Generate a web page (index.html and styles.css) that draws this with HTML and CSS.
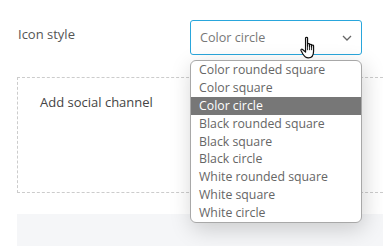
FILE: index.html
```html
<!DOCTYPE html>
<html lang="en">
<head>
  <meta charset="UTF-8" />
  <title>Icon style</title>
  <link rel="stylesheet" href="styles.css">
</head>
<body>

<div class="settings">
  <div class="field-row">
    <label class="field-label">Icon style</label>
    <div class="select-wrap">
      <div class="select-box">
        <span class="select-value">Color circle</span>
        <svg class="chevron" width="10" height="6" viewBox="0 0 10 6">
          <path d="M1 1 L5 5 L9 1" fill="none" stroke="#666" stroke-width="1.3"/>
        </svg>
      </div>

      <ul class="options">
        <li>Color rounded square</li>
        <li>Color square</li>
        <li class="selected">Color circle</li>
        <li>Black rounded square</li>
        <li>Black square</li>
        <li>Black circle</li>
        <li>White rounded square</li>
        <li>White square</li>
        <li>White circle</li>
      </ul>

      <!-- mouse pointer -->
      <svg class="pointer" width="20" height="25" viewBox="0 0 18 22">
        <path d="M5 1.5 C5 0.8 6.8 0.8 6.8 1.5 L6.8 9 L6.8 7.2 C6.8 6.4 8.6 6.4 8.6 7.2 L8.6 9.3 L8.6 7.8 C8.6 7 10.4 7 10.4 7.8 L10.4 9.8 L10.4 8.6 C10.4 7.8 12.2 7.8 12.2 8.6 L12.2 13.5 C12.2 17 10.5 19.5 7.5 19.5 C5 19.5 3.8 18 2.6 16 L0.9 12.8 C0.5 12 1.5 11.2 2.3 11.9 L5 14.2 Z"
              fill="#fff" stroke="#111" stroke-width="1.1" stroke-linejoin="round"/>
        <path d="M6.8 9 L6.8 12.5 M8.6 9.3 L8.6 12.5 M10.4 9.8 L10.4 12.5" stroke="#111" stroke-width="0.8"/>
      </svg>
    </div>
  </div>

  <div class="channel-box">
    <h4>Add social channel</h4>
  </div>

  <div class="footer-strip"></div>
</div>

</body>
</html>
```

FILE: styles.css
```css
* { box-sizing: border-box; margin: 0; padding: 0; }

body {
  font-family: 'Open Sans', sans-serif;
  background: #fff;
  color: #444;
  overflow: hidden;
}

.settings {
  padding: 20px 0 0 17px;
}

.field-row {
  display: flex;
  align-items: flex-start;
  height: 57px;
}

.field-label {
  width: 173px;
  padding: 5px 0 0 1px;
  font-size: 13px;
  color: #555;
}

.select-wrap {
  position: relative;
  width: 172px;
}

.select-box {
  display: flex;
  align-items: center;
  justify-content: space-between;
  height: 35px;
  padding: 0 9px 0 9px;
  border: 1px solid #29a6dc;
  border-radius: 3px;
  background: #fff;
}

.select-value {
  font-size: 12.6px;
  color: #777;
}

.options {
  position: absolute;
  top: 40px;
  left: 0;
  width: 172px;
  list-style: none;
  background: #fff;
  border: 1px solid #a8a8a8;
  border-radius: 6px;
  box-shadow: 2px 6px 22px rgba(0,0,0,0.18);
  overflow: hidden;
  z-index: 2;
}

.options li {
  height: 17.9px;
  line-height: 17.9px;
  padding-left: 8px;
  font-size: 12.3px;
  color: #666;
  white-space: nowrap;
}

.options li.selected {
  background: #777;
  color: #fff;
}

.pointer {
  position: absolute;
  left: 110px;
  top: 16px;
  z-index: 3;
}

.channel-box {
  height: 116px;
  border: 1px dashed #ccc;
  border-right: none;
  padding: 15px 0 0 22px;
}

.channel-box h4 {
  font-size: 13px;
  font-weight: 400;
  color: #444;
}

.footer-strip {
  margin-top: 21px;
  height: 40px;
  background: #f5f6f8;
}
```
